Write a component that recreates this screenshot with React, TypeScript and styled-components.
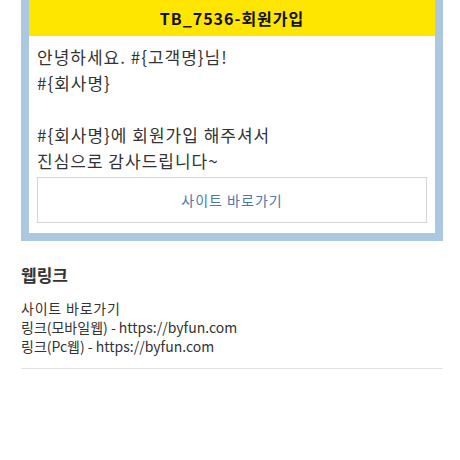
import React from "react";
import styled, { createGlobalStyle } from "styled-components";

const Global = createGlobalStyle`
  html, body { margin: 0; padding: 0; background: #fff; }
  body { font-family: "Noto Sans CJK KR", "Noto Sans", sans-serif; color: #333; }
`;

const Page = styled.div`
  width: 422px;
  margin: 0 17px 0 21px;
`;

const Frame = styled.div`
  border: 8px solid #abc8e0;
  border-top: none;
  background: #fff;
`;

const Header = styled.div`
  height: 36px;
  background: #ffe600;
  display: flex;
  align-items: center;
  justify-content: center;
  font-size: 16px;
  font-weight: 700;
  letter-spacing: 1px;
  color: #111;
`;

const Body = styled.div`
  padding: 8px 8px 10px 8px;
`;

const Message = styled.div`
  font-size: 17px;
  line-height: 26px;
  letter-spacing: 1px;
  color: #333;
  white-space: pre-line;
`;

const LinkButton = styled.div`
  margin-top: 3px;
  height: 44px;
  border: 1px solid #d4d4d4;
  display: flex;
  align-items: center;
  justify-content: center;
  font-size: 14px;
  letter-spacing: 1px;
  color: #4a78ad;
`;

const Section = styled.div`
  padding-top: 22px;
  padding-bottom: 12px;
  border-bottom: 1px solid #e2e2e2;
`;

const SectionTitle = styled.div`
  font-size: 17px;
  font-weight: 700;
  color: #333;
  line-height: 24px;
`;

const LinkList = styled.div`
  margin-top: 12px;
  font-size: 14px;
  line-height: 19px;
  color: #333;
  display: flex;
  flex-direction: column;
`;

const Plain = styled.span`
  letter-spacing: 0.8px;
`;

export default function App() {
  return (
    <>
      <Global />
      <Page>
        <Frame>
          <Header>TB_7536-회원가입</Header>
          <Body>
            <Message>
              {"안녕하세요. #{고객명}님!\n#{회사명}\n\n#{회사명}에 회원가입 해주셔서\n진심으로 감사드립니다~"}
            </Message>
            <LinkButton>사이트 바로가기</LinkButton>
          </Body>
        </Frame>
        <Section>
          <SectionTitle>웹링크</SectionTitle>
          <LinkList>
            <Plain>사이트 바로가기</Plain>
            <span>링크(모바일웹) - https://byfun.com</span>
            <span>링크(Pc웹) - https://byfun.com</span>
          </LinkList>
        </Section>
      </Page>
    </>
  );
}
